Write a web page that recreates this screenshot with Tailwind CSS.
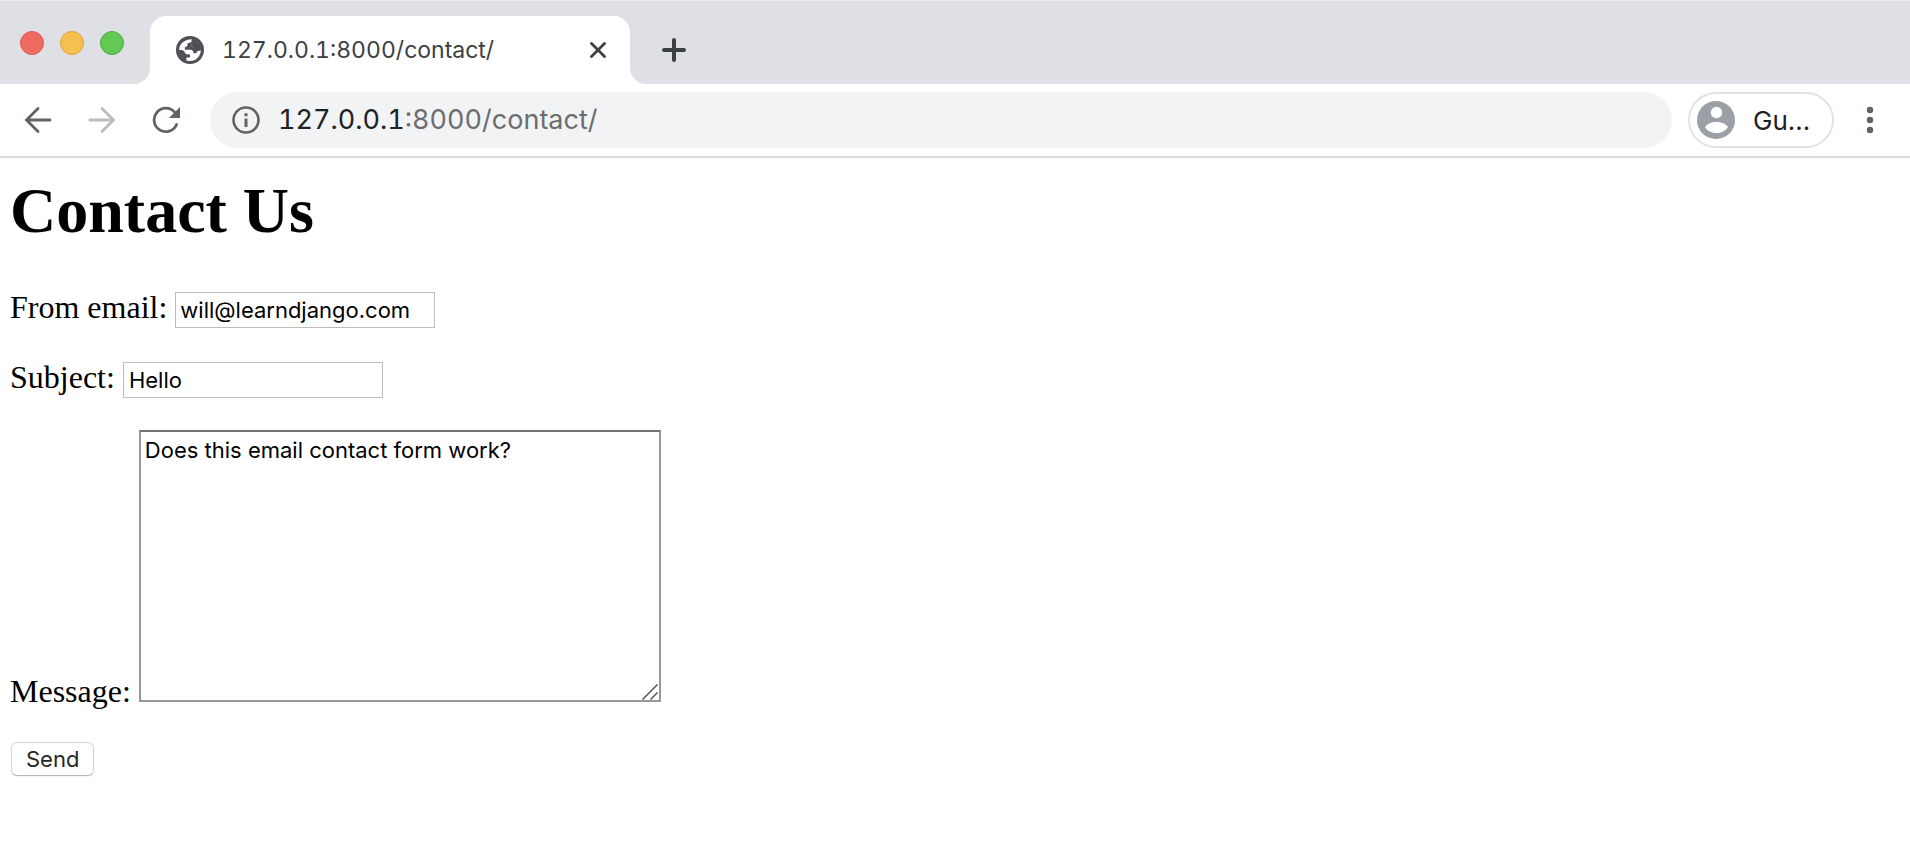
<!DOCTYPE html>
<html lang="en">
<head>
  <meta charset="UTF-8" />
  <meta name="viewport" content="width=device-width, initial-scale=1.0" />
  <title>127.0.0.1:8000/contact/</title>
  <script src="https://cdn.jsdelivr.net/npm/@tailwindcss/browser@4"></script>
</head>
<body class="min-h-screen bg-white font-['Inter','Liberation_Sans',sans-serif]">
  <header>
    <!-- Tab strip -->
    <div class="flex h-[84px] items-end border-t border-[#ececee] bg-[#dfe0e6]">
      <div class="flex w-[134px] gap-4 self-start pt-[30px] pl-5">
        <button aria-label="Close window" class="size-6 rounded-full border border-[#dc5a50] bg-[#ed6b60]"></button>
        <button aria-label="Minimize window" class="size-6 rounded-full border border-[#dfa33c] bg-[#f5c04f]"></button>
        <button aria-label="Zoom window" class="size-6 rounded-full border border-[#4cab3e] bg-[#62c955]"></button>
      </div>
      <svg class="size-4 text-white" viewBox="0 0 16 16" fill="currentColor"><path d="M16 0v16H0A16 16 0 0 0 16 0z" /></svg>
      <div class="flex h-[68px] w-[480px] items-center rounded-t-2xl bg-white pr-6 pl-[26px]">
        <svg class="size-7 shrink-0" viewBox="0 0 28 28">
          <circle cx="14" cy="14" r="14" fill="#505157" />
          <path fill="#fff" d="M3.200 14C3.200 8 8 3.300 15.600 3.200V4.800C15.600 6.200 14.600 6.800 13.200 6.800C11.800 6.900 11.400 7.700 11.400 9C11.400 10.200 10.700 10.800 9.500 10.900C8.900 11 8.800 11.400 8.800 12V13.800H14.200C16.600 13.900 17.500 15.200 17.500 17.200H19.600C21.400 17.200 22.200 18.200 22.200 20.200C24 18.600 24.900 16.400 24.900 14C24.900 20.200 20 25 14 25C12.600 25 11.400 24.800 10.400 24.400V21.600H12.600C14 21.600 14.200 20.700 14.200 19.700C14.200 18.700 13.400 18.200 12.300 18.200H10.800C9.600 18.100 9.200 16.800 8.300 15.400C7.600 14.300 6.200 14 3.200 14z" />
          <path fill="#fff" d="M18.500 4.200C22.500 5.800 24.900 9.500 24.900 14C24.800 17 23.800 19 22.200 20.400L20 18C20.500 16 21.500 14.800 24 14.300C22.500 14.600 21.200 14 20.600 13.200C19.800 12.300 18.600 12.200 17.600 12.100C16 11.900 15.600 10.400 15.700 8.900C15.800 7.800 16.500 7.300 17.500 7.200C18.500 7 18.700 6 18.500 4.200z" />
          <path fill="#505157" d="M16.800 3L20.500 4.500L24.500 9L25.500 14.300C23.500 15 21.500 14.900 20.600 13.400L17.600 12.200C16 11.900 15.500 10.400 15.700 8.600C15.900 7.800 16.800 7.300 17 6.500z" />
        </svg>
        <span class="ml-[18px] grow text-[23px] text-[#3c4043] tabular-nums">127.0.0.1:8000/contact/</span>
        <button aria-label="Close tab" class="text-[#3c4043]">
          <svg class="size-4" viewBox="0 0 16 16" fill="none" stroke="currentColor" stroke-width="2.800" stroke-linecap="round"><path d="M1.500 1.500l13 13M14.500 1.500l-13 13" /></svg>
        </button>
      </div>
      <svg class="size-4 text-white" viewBox="0 0 16 16" fill="currentColor"><path d="M0 0v16h16A16 16 0 0 1 0 0z" /></svg>
      <button aria-label="New tab" class="mb-[22px] ml-4 text-[#3c4043]">
        <svg class="size-6" viewBox="0 0 24 24" fill="none" stroke="currentColor" stroke-width="4" stroke-linecap="round"><path d="M12 2v20M2 12h20" /></svg>
      </button>
    </div>

    <!-- Toolbar -->
    <div class="flex h-[74px] items-center border-b-2 border-[#dadbe1] pr-[37px] pl-6">
      <button aria-label="Back" class="text-[#5f6368]">
        <svg class="size-7" viewBox="0 0 28 28" fill="none" stroke="currentColor" stroke-width="2.800" stroke-linecap="round"><path d="M26 14H3M14 2.500L2.500 14L14 25.500" /></svg>
      </button>
      <button aria-label="Forward" class="ml-9 text-[#babcbe]" disabled>
        <svg class="size-7" viewBox="0 0 28 28" fill="none" stroke="currentColor" stroke-width="2.800" stroke-linecap="round"><path d="M2 14h23M14 2.500L25.500 14L14 25.500" /></svg>
      </button>
      <button aria-label="Reload" class="ml-9 text-[#5f6368]">
        <svg class="size-7" viewBox="0 0 28 28" fill="none" stroke="currentColor" stroke-width="2.800" stroke-linecap="round"><path d="M24.600 18.500A11.700 11.700 0 1 1 22.800 6.400" /><path fill="currentColor" stroke="none" d="M28 1v11H17z" /></svg>
      </button>
      <div class="ml-[30px] flex h-14 grow items-center rounded-full bg-[#f1f3f4] pl-[22px]">
        <svg class="size-7" viewBox="0 0 28 28" fill="none" stroke="#626366" stroke-width="2.600"><circle cx="14" cy="14" r="12.500" /><path d="M14 12.500v8.500M14 7.200v3" stroke-width="3" /></svg>
        <span class="ml-[18px] text-[27px] text-[#6c6d70] tabular-nums"><span class="text-[#202124]">127.0.0.1</span>:8000/contact/</span>
      </div>
      <button class="ml-4 flex h-14 w-[146px] items-center rounded-full border-2 border-[#e3e3e4] pl-[7px] text-[#202124]">
        <svg class="size-[38px]" viewBox="0 0 38 38"><circle cx="19" cy="19" r="19" fill="#9aa0a6" /><circle cx="19.500" cy="11.500" r="5.700" fill="#fff" /><path fill="#fff" d="M8 26.200C10 22.500 15 21 19.500 21S29 22.500 31 26.200C28.500 30 24 32 19.500 32S10.500 30 8 26.200z" /></svg>
        <span class="ml-[18px] text-[26px]">Gu...</span>
      </button>
      <button aria-label="Menu" class="ml-[33px] text-[#5f6368]">
        <svg class="h-7 w-[6px]" viewBox="0 0 6 28" fill="currentColor" overflow="visible"><circle cx="3" cy="4" r="3.200" /><circle cx="3" cy="14" r="3.200" /><circle cx="3" cy="24" r="3.200" /></svg>
      </button>
    </div>
  </header>

  <main class="px-[10px] pt-[15px] font-['Liberation_Serif',serif] text-[32px] leading-9 text-black">
    <h1 class="mb-10 text-[64px] leading-[76px] font-bold">Contact Us</h1>
    <form>
      <p class="mb-[31px]">
        <label for="from_email">From email:</label>
        <input id="from_email" type="email" value="will@learndjango.com" class="h-9 w-[260px] border border-[#bdbdbd] px-1 font-['Inter','Liberation_Sans',sans-serif] text-[22px]" />
      </p>
      <p class="mb-8">
        <label for="subject">Subject:</label>
        <input id="subject" type="text" value="Hello" class="h-9 w-[260px] border border-[#bdbdbd] px-[5px] font-['Inter','Liberation_Sans',sans-serif] text-[22px]" />
      </p>
      <p class="mb-[33px]">
        <label for="message">Message:</label>
        <span class="relative inline-block">
          <textarea id="message" class="h-[272px] w-[522px] resize-none border-2 border-[#999] border-t-[#737373] px-1 py-1 align-baseline font-['Inter','Liberation_Sans',sans-serif] text-[22px] leading-7">Does this email contact form work?</textarea>
          <svg class="pointer-events-none absolute right-[3px] bottom-[9px] size-4" viewBox="0 0 16 16" fill="none" stroke="#555" stroke-width="1.500"><path d="M.5 15.500l15-15M8.500 15.500l7-7" /></svg>
        </span>
      </p>
      <button type="button" class="ml-px block h-[34px] rounded-md border border-[#d2d2d2] border-b-[#b8b8b8] bg-white px-[14px] font-['Inter','Liberation_Sans',sans-serif] text-[22px] leading-8 text-[#262626] shadow-xs">Send</button>
    </form>
  </main>
</body>
</html>
